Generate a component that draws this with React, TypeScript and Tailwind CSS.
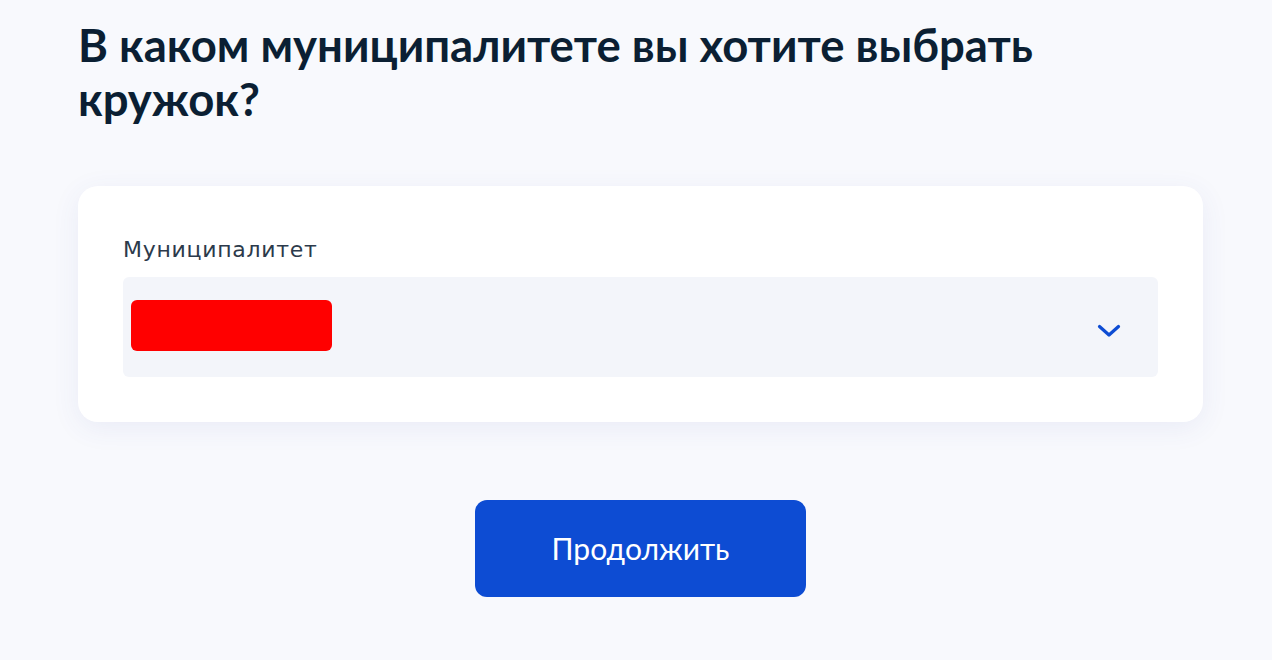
import { FC } from "react";

const ChevronDown: FC = () => (
  <svg width="24" height="14" viewBox="0 0 24 14" fill="none">
    <path
      d="M2.5 2.5l9.5 8.5 9.5-8.5"
      stroke="#0d4cd3"
      strokeWidth="3.2"
      strokeLinecap="round"
      strokeLinejoin="round"
    />
  </svg>
);

export default function App() {
  return (
    <div className="min-h-[660px] w-full bg-[#f8f9fd] font-['Lato','Inter',sans-serif]">
      <div className="w-[1125px] ml-[78px] pt-[18px]">
        <h1 className="text-[45.5px] leading-[54px] font-bold text-[#0b1f33] pr-[60px]">
          В каком муниципалитете вы хотите выбрать кружок?
        </h1>

        <div className="mt-[60px] rounded-[20px] bg-white px-[45px] pt-[51px] pb-[45px] shadow-[0_6px_28px_rgba(60,80,160,0.08)]">
          <label className="block font-['DejaVu_Sans',sans-serif] text-[22px] leading-[25px] tracking-[0.7px] text-[#2c3a4b]">
            Муниципалитет
          </label>
          <div
            role="button"
            className="mt-[15px] h-[100px] rounded-[6px] bg-[#f3f5fa] flex flex-row items-center justify-between pl-[8px] pr-[37px]"
          >
            <div className="w-[201px] h-[51px] rounded-[6px] bg-[#ff0000] mb-[3px]" />
            <div className="mt-[8px]">
              <ChevronDown />
            </div>
          </div>
        </div>

        <div className="flex justify-center mt-[78px]">
          <button className="w-[331px] h-[97px] rounded-[12px] bg-[#0d4cd3] text-white text-[30px]">
            Продолжить
          </button>
        </div>
      </div>
    </div>
  );
}
